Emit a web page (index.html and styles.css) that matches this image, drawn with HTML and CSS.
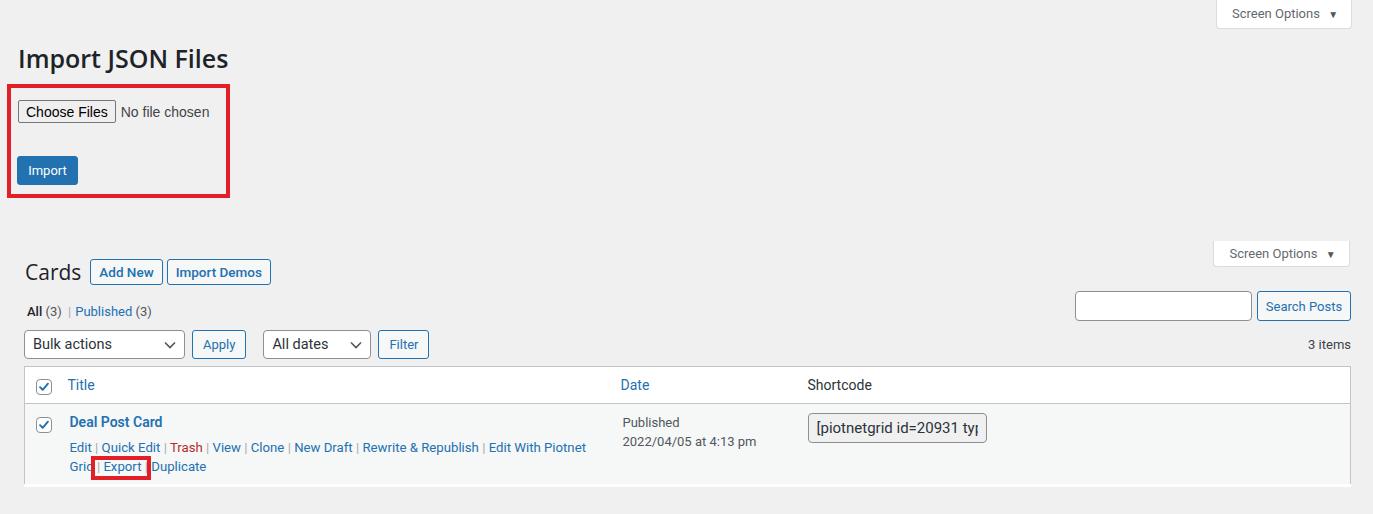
FILE: index.html
```html
<!DOCTYPE html>
<html lang="en">
<head>
    <meta charset="UTF-8">
    <title>Import JSON Files</title>
    <link rel="stylesheet" href="styles.css">
</head>
<body>
    <div class="screen-tab-wrap">
        <button class="screen-tab">Screen Options <span class="arrow">&#9660;</span></button>
    </div>

    <div class="wrap import-wrap">
        <h1 class="page-title">Import JSON Files</h1>
        <form class="import-box">
            <input type="file" class="file-input" multiple>
            <button type="button" class="btn-primary">Import</button>
        </form>
    </div>

    <div class="screen-tab-wrap second">
        <button class="screen-tab">Screen Options <span class="arrow">&#9660;</span></button>
    </div>

    <div class="wrap list-wrap">
        <div class="heading-row">
            <h2 class="list-title">Cards</h2>
            <a class="btn-outline" href="#">Add New</a>
            <a class="btn-outline" href="#">Import Demos</a>
        </div>

        <div class="filter-row">
            <ul class="subsubsub">
                <li><b>All</b> <span class="count">(3)</span> <span class="sep">|</span></li>
                <li><a href="#">Published</a> <span class="count">(3)</span></li>
            </ul>
            <div class="search-box">
                <input type="search" class="search-input">
                <button class="btn-outline">Search Posts</button>
            </div>
        </div>

        <div class="tablenav">
            <select class="select bulk"><option>Bulk actions</option></select>
            <button class="btn-outline">Apply</button>
            <select class="select dates"><option>All dates</option></select>
            <button class="btn-outline">Filter</button>
            <span class="items">3 items</span>
        </div>

        <table class="list-table">
            <thead>
                <tr>
                    <th class="check-col"><span class="checkbox"><svg viewBox="0 0 16 16" width="16" height="16"><path d="M3.5 8.2l3 3 6-7" fill="none" stroke="#2271b1" stroke-width="2.2" stroke-linecap="round" stroke-linejoin="round"/></svg></span></th>
                    <th class="title-col"><a href="#">Title</a></th>
                    <th class="date-col"><a href="#">Date</a></th>
                    <th class="code-col">Shortcode</th>
                </tr>
            </thead>
            <tbody>
                <tr>
                    <td class="check-col"><span class="checkbox"><svg viewBox="0 0 16 16" width="16" height="16"><path d="M3.5 8.2l3 3 6-7" fill="none" stroke="#2271b1" stroke-width="2.2" stroke-linecap="round" stroke-linejoin="round"/></svg></span></td>
                    <td class="title-col">
                        <a class="row-title" href="#">Deal Post Card</a>
                        <div class="row-actions"><a href="#">Edit</a><span class="sep"> | </span><a href="#">Quick Edit</a><span class="sep"> | </span><a class="trash" href="#">Trash</a><span class="sep"> | </span><a href="#">View</a><span class="sep"> | </span><a href="#">Clone</a><span class="sep"> | </span><a href="#">New Draft</a><span class="sep"> | </span><a href="#">Rewrite &amp; Republish</a><span class="sep"> | </span><a href="#">Edit With Piotnet Grid</a><span class="marked"><span class="sep"> | </span><a href="#">Export</a><span class="sep"> |</span></span><span class="sep"> </span><a href="#">Duplicate</a></div>
                    </td>
                    <td class="date-col"><div>Published</div><div>2022/04/05 at 4:13 pm</div></td>
                    <td class="code-col"><input class="shortcode" type="text" value="[piotnetgrid id=20931 type=card]" readonly></td>
                </tr>
            </tbody>
        </table>
    </div>
</body>
</html>
```

FILE: styles.css
```css
body { margin: 0; background: #f0f0f1; color: #3c434a; font-family: Roboto, "Noto Sans", sans-serif; font-size: 13px; }
a { color: #2271b1; text-decoration: none; }

.screen-tab-wrap { display: flex; justify-content: flex-end; padding-right: 21px; }
.screen-tab-wrap.second { padding-right: 23px; margin-top: 43px; }
.screen-tab { background: #fff; border: 1px solid #dcdcde; border-top: none; border-radius: 0 0 4px 4px; color: #646970; font: 13px Roboto, sans-serif; height: 29px; width: 136px; padding: 0 0 1px 2px; }
.second .screen-tab { height: 26px; width: 137px; }
.screen-tab .arrow { font-size: 10px; margin-left: 5px; color: #50575e; }

.import-wrap { padding-left: 7px; }
.page-title { margin: 13px 0 10px 11px; font-family: "Open Sans", sans-serif; font-size: 25px; font-weight: 600; color: #1d2327; line-height: 32px; }
.import-box { border: 4px solid #e21f26; padding: 12px 0 0 7px; width: 208px; height: 94px; display: flex; flex-direction: column; align-items: flex-start; }
.file-input { font: 14px "Liberation Sans", Arial, sans-serif; color: #444; }
.file-input::file-selector-button { font: 14px "Liberation Sans", Arial, sans-serif; color: #000; background: #efefef; border: 1px solid #767676; border-radius: 2px; padding: 2px 7px; height: 23px; margin-right: 5px; }
.btn-primary { margin-top: 33px; margin-left: -1px; background: #2271b1; color: #fff; border: 1px solid #2271b1; border-radius: 3px; font: 13px Roboto, sans-serif; height: 29px; width: 61px; padding: 0; }

.list-wrap { margin: 0 22px 0 24px; }
.heading-row { display: flex; align-items: center; gap: 4px; margin-top: -10px; }
.list-title { margin: 0 5px 0 1px; font-family: "Open Sans", sans-serif; font-size: 21px; font-weight: 400; color: #1d2327; line-height: 30px; }
.btn-outline { display: inline-flex; align-items: center; justify-content: center; background: #f6f7f7; color: #2271b1; border: 1px solid #2271b1; border-radius: 3px; font: 13px Roboto, sans-serif; height: 26px; padding: 0 10px; box-sizing: border-box; }
.heading-row .btn-outline { font-weight: 500; font-size: 13.5px; padding: 0 8px; }

.filter-row { display: flex; justify-content: space-between; align-items: flex-start; margin-top: 4px; }
.subsubsub { list-style: none; margin: 0; padding: 11px 0 0 3px; display: flex; gap: 4px; font-size: 13px; line-height: 19px; color: #1d2327; }
.subsubsub b { font-weight: 500; }
.subsubsub .count { color: #50575e; }
.subsubsub .sep { color: #a7aaad; margin-left: 3px; }
.search-box { display: flex; gap: 5px; }
.search-input { width: 177px; height: 30px; box-sizing: border-box; border: 1px solid #8c8f94; border-radius: 4px; background: #fff; }
.search-box .btn-outline { height: 30px; width: 94px; padding: 0; }

.tablenav { display: flex; align-items: center; gap: 7px; margin-top: 9px; height: 29px; }
.select { appearance: none; height: 29px; border: 1px solid #8c8f94; border-radius: 4px; background: #fff url("data:image/svg+xml,%3Csvg xmlns='http://www.w3.org/2000/svg' width='12' height='8'%3E%3Cpath d='M1 1.5l5 5 5-5' fill='none' stroke='%2350575e' stroke-width='1.6'/%3E%3C/svg%3E") no-repeat right 8px center; font: 14.5px Roboto, sans-serif; color: #2c3338; padding: 0 24px 0 8px; }
.select.bulk { width: 161px; }
.select.dates { width: 108px; margin-left: 10px; }
.tablenav .btn-outline { height: 29px; padding: 0 10px; }
.items { margin-left: auto; color: #3c434a; }

.list-table { width: 100%; table-layout: fixed; border-collapse: collapse; margin-top: 7px; border: 1px solid #c3c4c7; border-bottom: none; background: #fff; }
.list-table th, .list-table td { box-sizing: border-box; }
.list-table th { text-align: left; font-weight: 400; height: 37px; padding: 0 10px; border-bottom: 1px solid #c3c4c7; color: #2c3338; font-size: 14px; }
.list-table td { vertical-align: top; background: #f6f7f7; padding: 9px 10px 8px; color: #50575e; line-height: 19px; border-bottom: 3px solid #fff; }
.list-table .check-col { width: 33px; padding: 0 0 0 11px; }
.list-table th.check-col { padding-top: 2px; }
.list-table td.check-col { padding-top: 10px; }
.checkbox { display: inline-flex; width: 16px; height: 16px; border: 1px solid #8c8f94; border-radius: 4px; background: #fff; box-sizing: border-box; align-items: center; justify-content: center; vertical-align: middle; }
.checkbox svg { width: 14px; height: 14px; }
.title-col { width: 553px; }
.list-table td.title-col { padding-left: 12px; }
.date-col { width: 187px; }
.list-table td.date-col { padding-left: 12px; }
.row-title { font-size: 14px; font-weight: 600; }
.row-actions { margin-top: 6px; font-size: 13.2px; }
.row-actions .sep { color: #a7aaad; white-space: pre; }
.row-actions .trash { color: #b32d2e; }
.marked { outline: 4px solid #e21f26; outline-offset: -1px; padding-bottom: 3px; }
.shortcode { display: block; width: 179px; height: 30px; box-sizing: border-box; border: 1px solid #8c8f94; border-radius: 4px; background: #f0f0f1; font: 15px Roboto, sans-serif; color: #2c3338; padding: 0 8px; }
```
